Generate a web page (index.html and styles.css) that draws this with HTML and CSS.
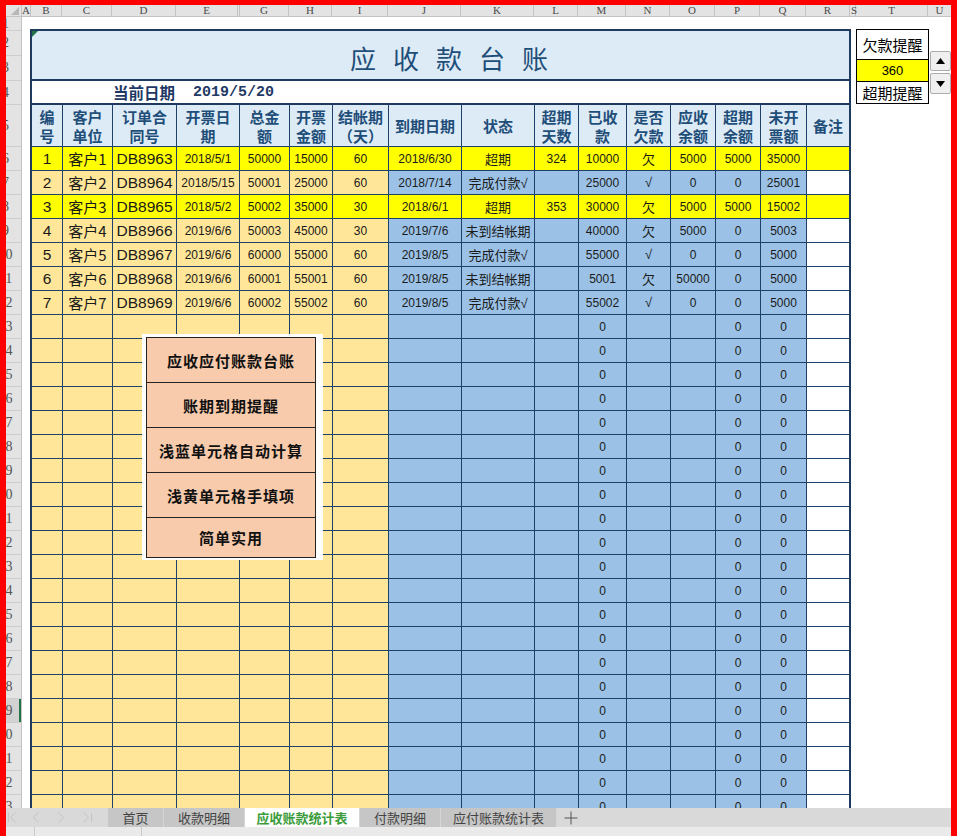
FILE: index.html
```html
<!DOCTYPE html>
<html lang="zh-CN">
<head>
<meta charset="utf-8">
<title>应收款台账</title>
<link rel="stylesheet" href="styles.css">
</head>
<body>
<div class="app">
  <div class="colhdr">
    <div class="corner"><svg width="15" height="11" viewBox="0 0 15 11"><polygon points="13,2 13,10 5,10" fill="#b8b8b8"/></svg></div>
    <div>A</div><div>B</div><div>C</div><div>D</div><div>E</div><div></div><div>G</div><div>H</div><div>I</div><div>J</div><div>K</div><div>L</div><div>M</div><div>N</div><div>O</div><div>P</div><div>Q</div><div>R</div><div class="narrow">S</div><div>T</div><div class="last">U</div>
  </div>

  <div class="sheet">
    <div class="rowhdr">
      <div class="rh h14">1</div>
      <div class="rh h25">2</div>
      <div class="rh h25">3</div>
      <div class="rh">4</div>
      <div class="rh h42">5</div>
      <div class="rh">6</div>
      <div class="rh">7</div>
      <div class="rh">8</div>
      <div class="rh">9</div>
      <div class="rh">10</div>
      <div class="rh">11</div>
      <div class="rh">12</div>
      <div class="rh">13</div>
      <div class="rh">14</div>
      <div class="rh">15</div>
      <div class="rh">16</div>
      <div class="rh">17</div>
      <div class="rh">18</div>
      <div class="rh">19</div>
      <div class="rh">20</div>
      <div class="rh">21</div>
      <div class="rh">22</div>
      <div class="rh">23</div>
      <div class="rh">24</div>
      <div class="rh">25</div>
      <div class="rh">26</div>
      <div class="rh">27</div>
      <div class="rh">28</div>
      <div class="rh sel">29</div>
      <div class="rh">30</div>
      <div class="rh">31</div>
      <div class="rh">32</div>
      <div class="rh">33</div>
    </div>

    <div class="canvas">
      <div class="ledger">
        <div class="title"><span>应</span><span>收</span><span>款</span><span>台</span><span>账</span></div>
        <div class="daterow"><span class="lbl">当前日期</span><span class="date">2019/5/20</span></div>

        <div class="row hdr"><span>编<br>号</span><span>客户<br>单位</span><span>订单合<br>同号</span><span>开票日<br>期</span><span>总金<br>额</span><span>开票<br>金额</span><span>结帐期<br>（天）</span><span>到期日期</span><span>状态</span><span>超期<br>天数</span><span>已收<br>款</span><span>是否<br>欠款</span><span>应收<br>余额</span><span>超期<br>余额</span><span>未开<br>票额</span><span>备注</span></div>

        <div class="row y"><span>1</span><span>客户1</span><span>DB8963</span><span>2018/5/1</span><span>50000</span><span>15000</span><span>60</span><span>2018/6/30</span><span>超期</span><span>324</span><span>10000</span><span>欠</span><span>5000</span><span>5000</span><span>35000</span><span></span></div>
        <div class="row"><span>2</span><span>客户2</span><span>DB8964</span><span>2018/5/15</span><span>50001</span><span>25000</span><span>60</span><span>2018/7/14</span><span>完成付款√</span><span></span><span>25000</span><span>√</span><span>0</span><span>0</span><span>25001</span><span></span></div>
        <div class="row y"><span>3</span><span>客户3</span><span>DB8965</span><span>2018/5/2</span><span>50002</span><span>35000</span><span>30</span><span>2018/6/1</span><span>超期</span><span>353</span><span>30000</span><span>欠</span><span>5000</span><span>5000</span><span>15002</span><span></span></div>
        <div class="row"><span>4</span><span>客户4</span><span>DB8966</span><span>2019/6/6</span><span>50003</span><span>45000</span><span>30</span><span>2019/7/6</span><span>未到结帐期</span><span></span><span>40000</span><span>欠</span><span>5000</span><span>0</span><span>5003</span><span></span></div>
        <div class="row"><span>5</span><span>客户5</span><span>DB8967</span><span>2019/6/6</span><span>60000</span><span>55000</span><span>60</span><span>2019/8/5</span><span>完成付款√</span><span></span><span>55000</span><span>√</span><span>0</span><span>0</span><span>5000</span><span></span></div>
        <div class="row"><span>6</span><span>客户6</span><span>DB8968</span><span>2019/6/6</span><span>60001</span><span>55001</span><span>60</span><span>2019/8/5</span><span>未到结帐期</span><span></span><span>5001</span><span>欠</span><span>50000</span><span>0</span><span>5000</span><span></span></div>
        <div class="row"><span>7</span><span>客户7</span><span>DB8969</span><span>2019/6/6</span><span>60002</span><span>55002</span><span>60</span><span>2019/8/5</span><span>完成付款√</span><span></span><span>55002</span><span>√</span><span>0</span><span>0</span><span>5000</span><span></span></div>

        <div class="row"><span></span><span></span><span></span><span></span><span></span><span></span><span></span><span></span><span></span><span></span><span>0</span><span></span><span></span><span>0</span><span>0</span><span></span></div>
        <div class="row"><span></span><span></span><span></span><span></span><span></span><span></span><span></span><span></span><span></span><span></span><span>0</span><span></span><span></span><span>0</span><span>0</span><span></span></div>
        <div class="row"><span></span><span></span><span></span><span></span><span></span><span></span><span></span><span></span><span></span><span></span><span>0</span><span></span><span></span><span>0</span><span>0</span><span></span></div>
        <div class="row"><span></span><span></span><span></span><span></span><span></span><span></span><span></span><span></span><span></span><span></span><span>0</span><span></span><span></span><span>0</span><span>0</span><span></span></div>
        <div class="row"><span></span><span></span><span></span><span></span><span></span><span></span><span></span><span></span><span></span><span></span><span>0</span><span></span><span></span><span>0</span><span>0</span><span></span></div>
        <div class="row"><span></span><span></span><span></span><span></span><span></span><span></span><span></span><span></span><span></span><span></span><span>0</span><span></span><span></span><span>0</span><span>0</span><span></span></div>
        <div class="row"><span></span><span></span><span></span><span></span><span></span><span></span><span></span><span></span><span></span><span></span><span>0</span><span></span><span></span><span>0</span><span>0</span><span></span></div>
        <div class="row"><span></span><span></span><span></span><span></span><span></span><span></span><span></span><span></span><span></span><span></span><span>0</span><span></span><span></span><span>0</span><span>0</span><span></span></div>
        <div class="row"><span></span><span></span><span></span><span></span><span></span><span></span><span></span><span></span><span></span><span></span><span>0</span><span></span><span></span><span>0</span><span>0</span><span></span></div>
        <div class="row"><span></span><span></span><span></span><span></span><span></span><span></span><span></span><span></span><span></span><span></span><span>0</span><span></span><span></span><span>0</span><span>0</span><span></span></div>
        <div class="row"><span></span><span></span><span></span><span></span><span></span><span></span><span></span><span></span><span></span><span></span><span>0</span><span></span><span></span><span>0</span><span>0</span><span></span></div>
        <div class="row"><span></span><span></span><span></span><span></span><span></span><span></span><span></span><span></span><span></span><span></span><span>0</span><span></span><span></span><span>0</span><span>0</span><span></span></div>
        <div class="row"><span></span><span></span><span></span><span></span><span></span><span></span><span></span><span></span><span></span><span></span><span>0</span><span></span><span></span><span>0</span><span>0</span><span></span></div>
        <div class="row"><span></span><span></span><span></span><span></span><span></span><span></span><span></span><span></span><span></span><span></span><span>0</span><span></span><span></span><span>0</span><span>0</span><span></span></div>
        <div class="row"><span></span><span></span><span></span><span></span><span></span><span></span><span></span><span></span><span></span><span></span><span>0</span><span></span><span></span><span>0</span><span>0</span><span></span></div>
        <div class="row"><span></span><span></span><span></span><span></span><span></span><span></span><span></span><span></span><span></span><span></span><span>0</span><span></span><span></span><span>0</span><span>0</span><span></span></div>
        <div class="row"><span></span><span></span><span></span><span></span><span></span><span></span><span></span><span></span><span></span><span></span><span>0</span><span></span><span></span><span>0</span><span>0</span><span></span></div>
        <div class="row"><span></span><span></span><span></span><span></span><span></span><span></span><span></span><span></span><span></span><span></span><span>0</span><span></span><span></span><span>0</span><span>0</span><span></span></div>
        <div class="row"><span></span><span></span><span></span><span></span><span></span><span></span><span></span><span></span><span></span><span></span><span>0</span><span></span><span></span><span>0</span><span>0</span><span></span></div>
        <div class="row"><span></span><span></span><span></span><span></span><span></span><span></span><span></span><span></span><span></span><span></span><span>0</span><span></span><span></span><span>0</span><span>0</span><span></span></div>
        <div class="row"><span></span><span></span><span></span><span></span><span></span><span></span><span></span><span></span><span></span><span></span><span>0</span><span></span><span></span><span>0</span><span>0</span><span></span></div>
      </div>

      <div class="remind">
        <div class="k1">欠款提醒</div>
        <div class="val">360</div>
        <div class="k2">超期提醒</div>
      </div>

      <div class="spin">
        <div><svg width="9" height="6" viewBox="0 0 9 6"><polygon points="4.5,0 9,6 0,6" fill="#000"/></svg></div>
        <div><svg width="9" height="6" viewBox="0 0 9 6"><polygon points="0,0 9,0 4.5,6" fill="#000"/></svg></div>
      </div>
    </div>

    <div class="popup">
      <div class="menu">
        <div>应收应付账款台账</div>
        <div>账期到期提醒</div>
        <div>浅蓝单元格自动计算</div>
        <div>浅黄单元格手填项</div>
        <div>简单实用</div>
      </div>
    </div>
  </div>

  <div class="tabbar">
    <div class="nav">
      <svg width="102" height="19" viewBox="0 0 102 19" fill="none" stroke="#c4c4c4" stroke-width="1">
        <path d="M2.5 5v9M9.5 4.5l-5 5 5 5"/>
        <path d="M32.5 4.5l-5 5 5 5"/>
        <path d="M52.5 4.5l5 5-5 5"/>
        <path d="M77.5 4.5l5 5-5 5M85.5 5v9"/>
      </svg>
    </div>
    <div class="tab t56">首页</div>
    <div class="tab t81">收款明细</div>
    <div class="tab t115 on">应收账款统计表</div>
    <div class="tab t81">付款明细</div>
    <div class="tab t116">应付账款统计表</div>
    <div class="plus"><svg width="14" height="14" viewBox="0 0 14 14" stroke="#555" stroke-width="1"><path d="M7 0.5v13M0.5 7h13"/></svg></div>
  </div>
  <div class="status"><span class="s1"></span><span class="s2"></span></div>
</div>
</body>
</html>
```

FILE: styles.css
```css
* { box-sizing: border-box; margin: 0; padding: 0; }

html, body {
  width: 957px;
  height: 836px;
  overflow: hidden;
  background: #fff;
}

body {
  font-family: "Noto Sans CJK SC", "Liberation Sans", sans-serif;
  color: #111;
}

.app {
  width: 957px;
  height: 836px;
  border: solid #ff0000;
  border-width: 5px 6px 0 6px;
  display: flex;
  flex-direction: column;
  background: #fff;
}

/* ---------- column letters ---------- */
.colhdr {
  flex: none;
  height: 12px;
  display: grid;
  grid-template-columns: 16px 9px 31px 50px 64px 62px 2px 49px 43px 56px 73px 73px 44px 48px 44px 45px 45px 46px 44px 6px 72px 1fr;
  background: #e3e3e3;
  border-bottom: 1px solid #c3c3c3;
  font: 11px/11px "Liberation Serif", serif;
  color: #4a4a4a;
}

.colhdr > div {
  border-right: 1px solid #c3c3c3;
  text-align: center;
  white-space: nowrap;
}

.colhdr > .narrow { text-align: left; padding-left: 1px; }
.colhdr > .last { border-right: 0; }
.colhdr > .corner svg { display: block; }

/* ---------- sheet ---------- */
.sheet {
  flex: none;
  height: 791px;
  position: relative;
  display: flex;
  overflow: hidden;
}

.rowhdr {
  flex: none;
  width: 16px;
  background: #e3e3e3;
  border-right: 1px solid #c3c3c3;
  overflow: hidden;
  font: 14px "Liberation Serif", serif;
  color: #555;
}

.rh {
  height: 24px;
  line-height: 23px;
  border-bottom: 1px solid #cdcdcd;
  text-align: center;
  text-indent: -16px;
  white-space: nowrap;
}

.rh.h14 { height: 14px; line-height: 13px; }
.rh.h25 { height: 25px; line-height: 24px; }
.rh.h42 { height: 42px; line-height: 41px; }
.rh.sel { background: #d2d2d2; box-shadow: inset -2px 0 #217346; }

.canvas {
  flex: none;
  width: 929px;
  display: flex;
  align-items: flex-start;
}

/* ---------- ledger ---------- */
.ledger {
  flex: none;
  width: 821px;
  margin: 12px 0 0 8px;
  border: 2px solid #1f3a5f;
}

.title {
  position: relative;
  height: 50px;
  background: #ddebf7;
  border-bottom: 2px solid #1f3a5f;
  display: flex;
  justify-content: center;
  align-items: center;
  gap: 17px;
  padding: 5px 0 0 17px;
  font-size: 26px;
  color: #1f4e79;
}

.title::before {
  content: "";
  position: absolute;
  left: 0;
  top: 0;
  border-style: solid;
  border-width: 6px 6px 0 0;
  border-color: #217346 transparent transparent transparent;
}

.daterow {
  height: 24px;
  border-bottom: 2px solid #1f3a5f;
  display: flex;
  align-items: center;
  padding-left: 81px;
  font-weight: 700;
  color: #1f3864;
}

.daterow .lbl { font-size: 15.5px; }
.daterow .date { font: 700 15px "Liberation Mono", monospace; margin-left: 18px; }

.row {
  display: grid;
  grid-template-columns: 31px 50px 64px 63px 50px 43px 56px 73px 73px 44px 48px 44px 45px 45px 46px 1fr;
  height: 24px;
  font: 12px "Liberation Sans", sans-serif;
  color: #1a1a1a;
}

.row > * {
  border-right: 1px solid #1f4068;
  border-bottom: 1px solid #1f4068;
  display: flex;
  align-items: center;
  justify-content: center;
  white-space: nowrap;
  background: #9bc2e6;
}

.row > :nth-child(-n+7) { background: #ffe699; }
.row > :last-child { border-right: 0; background: #fff; }
.row.y > * { background: #ffff00; }

.row > :nth-child(1),
.row > :nth-child(3) { font: 15.5px "Liberation Sans", sans-serif; }
.row > :nth-child(2) { font: 15px "Noto Sans CJK SC", sans-serif; }
.row > :nth-child(9),
.row > :nth-child(12) { font: 13px "Liberation Sans", "Noto Sans CJK SC", sans-serif; }

.row.hdr { height: 42px; }
.row.hdr > * {
  background: #ddebf7;
  font: 700 15px/19px "Noto Sans CJK SC", sans-serif;
  color: #1f4e79;
  text-align: center;
}

/* ---------- reminder box ---------- */
.remind {
  flex: none;
  width: 73px;
  margin: 12px 0 0 5px;
  border: 1px solid #000;
  font-size: 15px;
  text-align: center;
  color: #000;
}

.remind .k1 { height: 30px; line-height: 29px; border-bottom: 1px solid #000; }
.remind .val {
  height: 22px;
  line-height: 21px;
  background: #ffff00;
  border-bottom: 1px solid #000;
  font: 13px/21px "Liberation Sans", sans-serif;
}
.remind .k2 { height: 21px; line-height: 21px; }

.spin {
  flex: none;
  width: 21px;
  margin: 34px 0 0 1px;
  display: flex;
  flex-direction: column;
  gap: 2px;
}

.spin > div {
  height: 20px;
  border: 1px solid #acacac;
  border-radius: 2px;
  background: #efefef;
  display: flex;
  align-items: center;
  justify-content: center;
}

.spin > div + div { height: 21px; }
.spin svg { display: block; }

/* ---------- floating menu ---------- */
.popup {
  position: absolute;
  left: 136px;
  top: 317px;
  width: 181px;
  padding: 3px 7px 2px 4px;
  background: #fff;
}

.menu { border: 1px solid #222; }

.menu > div {
  height: 45px;
  border-top: 1px solid #222;
  background: #f8cbad;
  display: flex;
  align-items: center;
  justify-content: center;
  font: 700 15px "Noto Sans CJK SC", sans-serif;
  letter-spacing: 1px;
  color: #111;
}

.menu > div:first-child { height: 44px; border-top: 0; }
.menu > div:last-child { height: 40px; }

/* ---------- sheet tabs ---------- */
.tabbar {
  flex: none;
  height: 19px;
  display: flex;
  background: #d9d9d9;
  font-size: 13px;
  color: #444;
}

.nav { flex: none; width: 102px; }
.nav svg { display: block; }

.tab {
  flex: none;
  background: #c6c6c6;
  border-right: 1px solid #d6d6d6;
  text-align: center;
  line-height: 19px;
  white-space: nowrap;
}

.t56 { width: 56px; }
.t81 { width: 81px; }
.t115 { width: 115px; }
.t116 { width: 116px; }

.tab.on { background: #fff; color: #3c9c3c; font-weight: 700; }

.plus {
  flex: none;
  width: 28px;
  display: flex;
  align-items: center;
  justify-content: center;
}

.status {
  flex: none;
  height: 9px;
  background: #eaeaea;
  display: flex;
}

.status .s1 { width: 29px; border-right: 1px solid #cacaca; }
.status .s2 { width: 107px; border-right: 1px solid #cacaca; }
```
